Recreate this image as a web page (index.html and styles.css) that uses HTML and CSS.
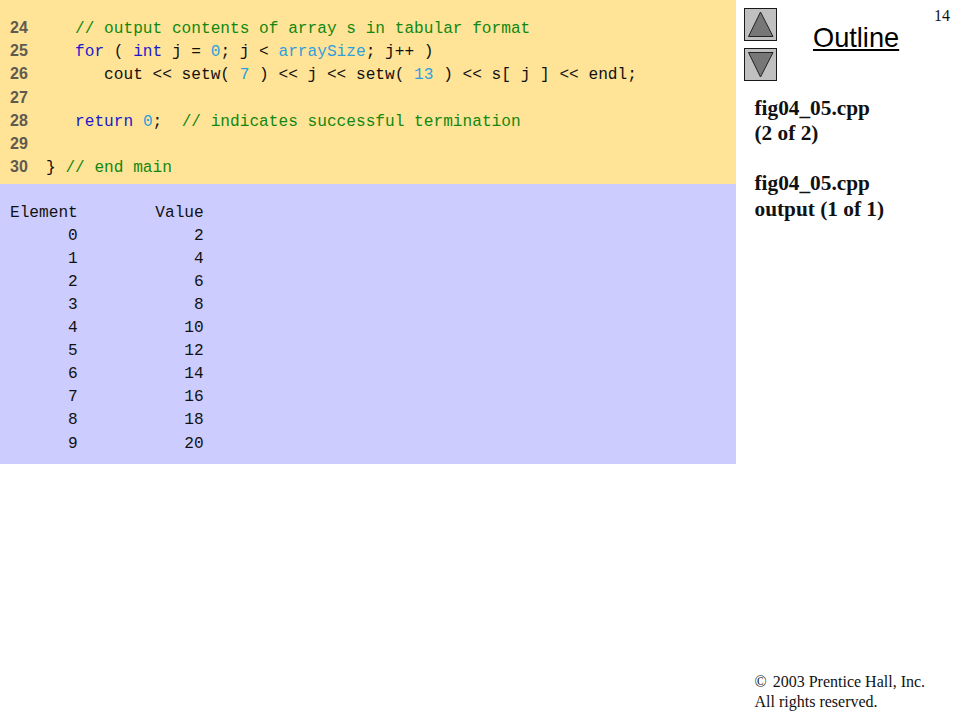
FILE: index.html
```html
<!DOCTYPE html>
<html lang="en">
<head>
<meta charset="utf-8">
<title>fig04_05.cpp</title>
<link rel="stylesheet" href="styles.css">
</head>
<body>
<main class="slide">
  <section class="content">
    <div class="code">
      <div class="row"><span class="num">24</span><code class="src">   <span class="c">// output contents of array s in tabular format</span></code></div>
      <div class="row"><span class="num">25</span><code class="src">   <span class="k">for</span> ( <span class="k">int</span> j = <span class="l">0</span>; j &lt; <span class="l">arraySize</span>; j++ )</code></div>
      <div class="row"><span class="num">26</span><code class="src">      cout &lt;&lt; setw( <span class="l">7</span> ) &lt;&lt; j &lt;&lt; setw( <span class="l">13</span> ) &lt;&lt; s[ j ] &lt;&lt; endl;</code></div>
      <div class="row"><span class="num">27</span><code class="src"></code></div>
      <div class="row"><span class="num">28</span><code class="src">   <span class="k">return</span> <span class="l">0</span>;  <span class="c">// indicates successful termination</span></code></div>
      <div class="row"><span class="num">29</span><code class="src"></code></div>
      <div class="row"><span class="num">30</span><code class="src">} <span class="c">// end main</span></code></div>
    </div>
    <pre class="output">Element        Value
      0            2
      1            4
      2            6
      3            8
      4           10
      5           12
      6           14
      7           16
      8           18
      9           20</pre>
  </section>
  <aside class="side">
    <header class="top">
      <div class="nav">
        <button class="navbtn" type="button" aria-label="Previous">
          <svg width="33" height="33" viewBox="0 0 33 33"><rect x="0.5" y="0.5" width="32" height="32" fill="#c0c0c0" stroke="#1a1a1a"/><path d="M16.5 4 L29 28.5 L4.5 28.5 Z" fill="#777" stroke="#222"/></svg>
        </button>
        <button class="navbtn" type="button" aria-label="Next">
          <svg width="33" height="33" viewBox="0 0 33 33"><rect x="0.5" y="0.5" width="32" height="32" fill="#c0c0c0" stroke="#1a1a1a"/><path d="M4.5 4.5 L29 4.5 L16.5 29 Z" fill="#777" stroke="#222"/></svg>
        </button>
      </div>
      <a class="outline" href="#">Outline</a>
      <span class="page">14</span>
    </header>
    <div class="caption">
      <p>fig04_05.cpp<br>(2 of 2)</p>
      <p>fig04_05.cpp<br>output (1 of 1)</p>
    </div>
    <footer class="legal"><span class="copy">©</span> 2003 Prentice Hall, Inc.<br>All rights reserved.</footer>
  </aside>
</main>
</body>
</html>
```
FILE: styles.css
```css
html, body {
  margin: 0;
  padding: 0;
  background: #fff;
}
.slide {
  display: flex;
  width: 960px;
  height: 720px;
  overflow: hidden;
}
.content {
  width: 736px;
  flex: none;
}
.code {
  background: #ffe397;
  height: 184px;
  box-sizing: border-box;
  padding-top: 16px;
}
.row {
  display: flex;
  height: 23.2px;
  line-height: 23.2px;
}
.num {
  width: 46px;
  padding-left: 10px;
  box-sizing: border-box;
  flex: none;
  font: bold 16px/23.2px "Liberation Sans", Arial, sans-serif;
  color: #5f5a50;
}
.src {
  margin-top: 2px;
  font: 16.15px/23.2px "Liberation Mono", "Courier New", monospace;
  white-space: pre;
  color: #111;
}
.c { color: #118811; }
.k { color: #1a1acc; }
.l { color: #2f9fdc; }
.output {
  margin: 0;
  height: 280px;
  box-sizing: border-box;
  padding: 17.6px 0 0 10px;
  background: #ccccff;
  font: 16.15px/23.1px "Liberation Mono", "Courier New", monospace;
  color: #111;
}
.side {
  flex: 1;
  display: flex;
  flex-direction: column;
  min-width: 0;
  font-family: "Liberation Serif", "Times New Roman", serif;
  color: #111;
}
.top {
  display: flex;
  align-items: flex-start;
  padding: 8px 10px 0 8px;
}
.nav {
  display: flex;
  flex-direction: column;
  gap: 7px;
}
.navbtn {
  display: block;
  width: 33px;
  height: 33px;
  padding: 0;
  border: 0;
  background: none;
}
.navbtn svg {
  display: block;
}
.outline {
  margin: 14px 0 0 36px;
  font: 27.2px/32px "Liberation Sans", Arial, sans-serif;
  color: #000;
  text-decoration: underline;
}
.page {
  margin: -1px 0 0 auto;
  font-size: 16px;
  line-height: 18px;
}
.caption {
  margin-top: 15px;
  padding-left: 18.5px;
  font-weight: bold;
  font-size: 21.3px;
  line-height: 25.4px;
}
.caption p {
  margin: 0 0 24.6px;
}
.legal {
  margin-top: auto;
  padding: 0 0 8px 18.5px;
  font-size: 16px;
  line-height: 20px;
}
.copy {
  margin-right: 2px;
}
```
